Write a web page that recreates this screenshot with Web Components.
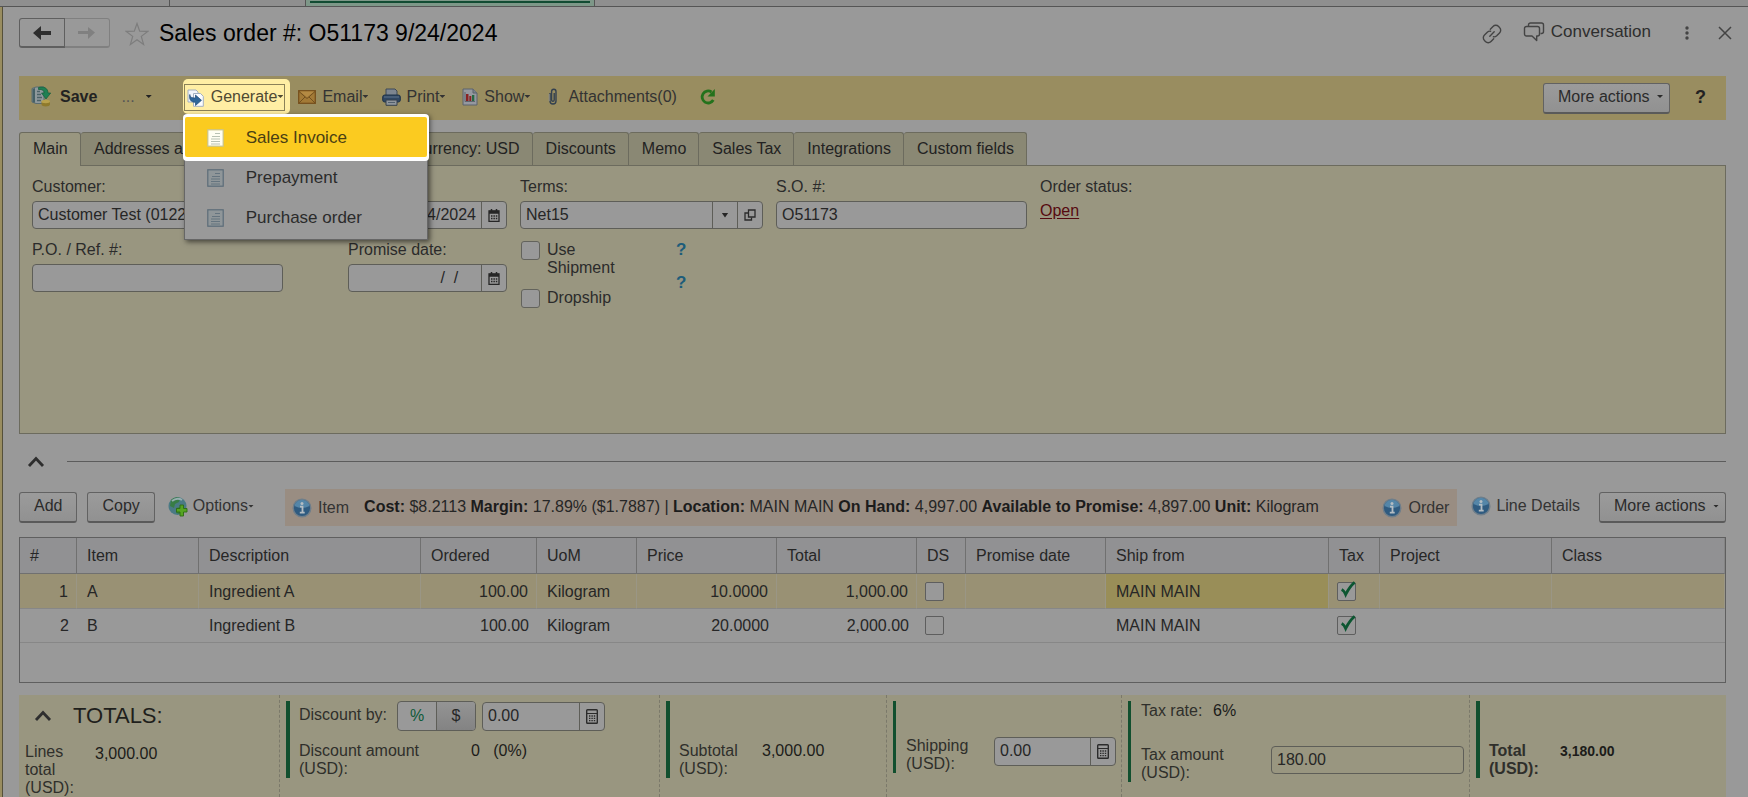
<!DOCTYPE html>
<html lang="en">
<head>
<meta charset="utf-8">
<title>Sales order #: O51173</title>
<style>
  body { margin: 0; background: #999; color: #2b2b2b; font: 16px/18px "Liberation Sans", Arial, sans-serif; }
</style>
</head>
<body>
<sales-order-page></sales-order-page>

<script>
const BASE = `
  *, *::before, *::after { box-sizing: border-box; }
  button, input, select { font: inherit; color: inherit; margin: 0; padding: 0; border: 0; background: none; border-radius: 0; outline: 0; }
  button { display: inline-flex; align-items: center; white-space: nowrap; cursor: pointer; }
  .arrow { width: 6px; height: 3px; background: currentColor; clip-path: polygon(0 0, 100% 0, 50% 100%); flex: none; }
`;
function define(name, css, html) {
  const tpl = document.createElement('template');
  tpl.innerHTML = `<style>${BASE}${css}</style>${html}`;
  customElements.define(name, class extends HTMLElement {
    constructor() {
      super();
      this.attachShadow({ mode: 'open' }).append(tpl.content.cloneNode(true));
    }
  });
}

/* Icons: [width, height, drawing] */
const ICONS = {
  back: [20, 16, '<path d="M9 1v5h10v4H9v5L1 8z" fill="#2e2e2e"/>'],
  forward: [20, 16, '<path d="M11 2v4H1v3h10v5l7-6.500z" fill="#808080"/>'],
  star: [24, 24, '<path d="M12 1.500l2.700 7.700 8 .2-6.400 5 2.300 8L12 17.700 5.400 22.400l2.300-8-6.400-5 8-.2z" fill="none" stroke="#7d7d7d" stroke-width="1.200"/>'],
  link: [20, 20, '<g fill="none" stroke="#444" stroke-width="1.400" stroke-linecap="round" stroke-linejoin="round"><path d="M8.300 5.200L11 2.500a3.900 3.900 0 0 1 5.600 0l.9.900a3.900 3.900 0 0 1 0 5.600l-2.800 2.800a3.900 3.900 0 0 1-3.300 1"/><path d="M11.700 14.800L9 17.500a3.900 3.900 0 0 1-5.600 0l-.9-.9a3.900 3.900 0 0 1 0-5.600l2.800-2.800a3.900 3.900 0 0 1 3.300-1"/><path d="M7.800 12.200l4.400-4.400"/></g>'],
  chat: [22, 20, '<g fill="none" stroke="#444" stroke-width="1.400" stroke-linejoin="round"><path d="M5.500 4.500V3a2 2 0 0 1 2-2h11a2 2 0 0 1 2 2v6.500a2 2 0 0 1-2 2h-1"/><path d="M3.500 4.500h11a2 2 0 0 1 2 2V12a2 2 0 0 1-2 2h-.8v4.500L9 14H3.500a2 2 0 0 1-2-2V6.500a2 2 0 0 1 2-2z"/></g>'],
  dots: [4, 14, '<g fill="#444"><circle cx="2" cy="2" r="1.700"/><circle cx="2" cy="7" r="1.700"/><circle cx="2" cy="12" r="1.700"/></g>'],
  close: [14, 14, '<path d="M1 1l12 12M13 1L1 13" stroke="#444" stroke-width="1.500"/>'],
  save: [20, 21, '<path d="M1 2.500L5 1h8v16.500H5L1 16z" fill="#8f999c" stroke="#5b6c70"/><path d="M1.500 3L4 2v14.800L1.500 16z" fill="#466066"/><path d="M6 5.500h3M6 8.500h4M6 11.500h5M6 14.500h4" stroke="#4c6267" stroke-width="1.300"/><path d="M7.500 1.500c5-1.500 9.500.5 9.500 5.500h2.700l-4.700 6L10.500 7h2.700c0-2.300-2-4-5.700-3.500z" fill="#1f8053" stroke="#155c3c" stroke-width=".7"/><path d="M10.500 15.500v3c0 2.600 8.500 2.600 8.500 0v-3z" fill="#8f7a2c"/><ellipse cx="14.700" cy="15.500" rx="4.300" ry="1.700" fill="#b8a14c"/>'],
  generate: [17, 18, '<path d="M1 1h8l2 2v10H1z" fill="#f1f5fb" stroke="#a3b0c0"/><path d="M6.500 4.500h7l2.800 2.800v10H6.500z" fill="#fafcff" stroke="#a3b0c0"/><path d="M2.800 5.500c.2 2.800 2 3.500 5.700 3.500V6l6 5.300-6 5.200v-3.200c-4.500 0-6.700-2.800-5.700-7.800z" fill="#2f6699" stroke="#1f4a78" stroke-width=".7"/>'],
  email: [18, 14, '<rect x=".7" y=".7" width="16.600" height="12.600" fill="#a37a36" stroke="#77501d" stroke-width="1.300"/><path d="M1 1.500l8 7 8-7M1 13l6-6M17 13l-6-6" fill="none" stroke="#72501f"/><path d="M2 1.400h14L9 7.300z" fill="#b48a43"/>'],
  print: [19, 18, '<path d="M4 1h9l2 2v5H4z" fill="#7c8590" stroke="#3d4856"/><rect x=".7" y="7" width="17.600" height="7" rx="2" fill="#2f4763" stroke="#1f3249"/><path d="M2 9h15" stroke="#60758b"/><path d="M4 12h11v5.300H4z" fill="#8f959b" stroke="#36404c"/><path d="M6 14.500h7" stroke="#52606d"/>'],
  show: [16, 18, '<path d="M1 1h10l4 4v12H1z" fill="#95989f" stroke="#5b636d"/><path d="M11 1v4h4" fill="#7d838b" stroke="#5b636d"/><path d="M3 4v9.500h10" fill="none" stroke="#60666e"/><path d="M4 6h2.500v7H4z" fill="#8a2222"/><path d="M7.300 8h2v5h-2z" fill="#8a2222"/><path d="M10 7h2.300v6H10z" fill="#276a43"/>'],
  clip: [10, 19, '<path d="M2 6v8a3 3 0 0 0 6 0V4.500a2.200 2.200 0 0 0-4.400 0V13a1.300 1.300 0 0 0 2.600 0V6" fill="none" stroke="#33414f" stroke-width="1.400"/><path d="M1.200 7v7" stroke="#8f8f8f"/>'],
  refresh: [17, 18, '<path d="M12.500 4A6 6 0 1 0 14.300 12" fill="none" stroke="#24721c" stroke-width="2.800"/><path d="M15.800 1v7.500H8.500z" fill="#24721c"/>'],
  doc: [17, 18, '<rect x=".8" y=".8" width="15.400" height="16.400" fill="var(--paper, #8f9699)" stroke="var(--edge, #5b6c78)" stroke-width="1.200"/><path d="M8 4.500h5M5 7.500h8M4 10h9M4 12.500h9M4 15h9" stroke="var(--rule, #65747f)"/>'],
  calendar: [12, 13, '<path d="M1 2h10v10.400H1z" fill="none" stroke="#262626" stroke-width="1.300"/><path d="M1 1.700h10v3H1z" fill="#262626"/><path d="M3.500 0v2.500M8.500 0v2.500" stroke="#262626" stroke-width="1.500"/><path d="M3 7h6.400M3 9.500h6.400" stroke="#262626" stroke-width="1.400" stroke-dasharray="1.500 .9"/>'],
  calc: [12, 15, '<rect x=".7" y=".7" width="10.600" height="13.600" rx=".8" fill="none" stroke="#2b2b2b" stroke-width="1.400"/><path d="M1 4.500h10" stroke="#2b2b2b" stroke-width="1.200"/><path d="M3 7h6.500M3 9.300h6.500M3 11.600h6.500" stroke="#2b2b2b" stroke-width="1.300" stroke-dasharray="1.400 1"/>'],
  open: [12, 12, '<g fill="none" stroke="#2b2b2b" stroke-width="1.300"><path d="M4.500 1h6.500v7H4.500z"/><path d="M4 4H1v7h6.500V8.500"/></g>'],
  chevron: [18, 12, '<path d="M2 10l7-7.500 7 7.500" fill="none" stroke="#2e2e2e" stroke-width="2.800"/>'],
  options: [21, 21, '<circle cx="9.500" cy="10" r="9" fill="#4a7a84"/><path d="M3 4c3-3 7-3.500 9-2l-1 4-4 2-1 4-4-2zM8 12l4-1 2 3-3 4-3-1z" fill="#387d45"/><path d="M4 5q5-4 10-1" fill="none" stroke="#96aeb0" stroke-width="2"/><path d="M12 9h3.500v3.500H19V16h-3.500v4H12v-4H8.500v-3.500H12z" fill="#56a521" stroke="#2e6b12" stroke-width=".9"/>'],
  info: [20, 20, '<circle cx="10" cy="10" r="8.800" fill="#2f5b80" stroke="#6f7e8a" stroke-width="1.400"/><path d="M2.500 8a7.600 7.600 0 0 1 15 0q-7.500 4-15 0z" fill="#5586a8"/><circle cx="10" cy="5.500" r="1.500" fill="#b4bdc3"/><path d="M8 8.700h2.500v6M7.800 14.700h4.900" fill="none" stroke="#b4bdc3" stroke-width="1.800"/>'],
  tick: [19, 20, '<path d="M3 9.500c2 1 3.500 3 4.500 5.500C10 10 13 5 17.500 1.500" fill="none" stroke="#0c5631" stroke-width="3.200"/>']
};
customElements.define('ui-icon', class extends HTMLElement {
  connectedCallback() {
    if (this.shadowRoot) return;
    const [w, h, art] = ICONS[this.getAttribute('name')];
    this.attachShadow({ mode: 'open' }).innerHTML =
      `<style>:host{display:inline-flex;flex:none} svg{display:block}</style><svg width="${w}" height="${h}" viewBox="0 0 ${w} ${h}" aria-hidden="true">${art}</svg>`;
  }
});

define('app-tab-strip', `
  :host { display: flex; height: 7px; background: #8f8f8f; border-bottom: 1px solid #555; box-sizing: border-box; }
  i { width: 170px; border-right: 1px solid #555; }
  i.second { width: 136px; }
  i.active { width: 289px; background: #7d9788; padding: 1px 4px; }
  i.active::before { content: ""; display: block; height: 2px; background: #114b32; }
`, '<i></i><i class="second"></i><i class="active"></i>');

define('order-header', `
  :host { display: flex; align-items: center; height: 69px; margin-right: -6px; padding: 11px 0 28px 0; box-sizing: border-box; }
  .nav { display: flex; }
  .nav button { width: 46px; height: 30px; justify-content: center; border: 1px solid #5f5f5f; border-bottom-width: 2px; border-radius: 3px 0 0 3px; }
  .nav button + button { width: 45px; border-color: #808080; border-left: 0; border-radius: 0 3px 3px 0; }
  .star { margin: 0 10px 0 15px; padding-top: 2px; }
  h1 { margin: 0; font-size: 23px; line-height: 28px; font-weight: 400; color: #000; flex: 1; white-space: nowrap; }
  .chat { font-size: 17px; gap: 6px; margin: 0 34px 0 21px; padding-bottom: 2px; color: #2e2e2e; }
  .link { padding-top: 2px; }
  .close { margin-left: 29px; }
`, `
  <div class="nav"><button aria-label="Back"><ui-icon name="back"></ui-icon></button><button aria-label="Forward"><ui-icon name="forward"></ui-icon></button></div>
  <button class="star" aria-label="Favorite"><ui-icon name="star"></ui-icon></button>
  <h1>Sales order #: O51173 9/24/2024</h1>
  <button class="link" aria-label="Copy link"><ui-icon name="link"></ui-icon></button>
  <button class="chat"><ui-icon name="chat"></ui-icon>Conversation</button>
  <button aria-label="Menu"><ui-icon name="dots"></ui-icon></button>
  <button class="close" aria-label="Close"><ui-icon name="close"></ui-icon></button>
`);

const PUSH = `
  :host { display: inline-flex; }
  button { height: 31px; padding: 0 14px 2px; border: 1px solid #626262; border-bottom: 2px solid #5a5a5a; border-radius: 3px; background: linear-gradient(#9b9b9b, #919191); color: #2b2b2b; }
`;
define('push-button', PUSH, '<button><slot></slot></button>');
define('more-actions', PUSH + `
  button { width: 127px; padding: 0 6px 2px 14px; justify-content: space-between; }
`, '<button>More actions<span class="arrow"></span></button>');

define('generate-menu', `
  :host { display: block; position: absolute; left: 1px; top: 35px; width: 244px; padding: 2px 0; z-index: 2; box-sizing: border-box; background: #999; border: 1px solid #666; box-shadow: 2px 2px 5px rgba(0,0,0,.55); font-size: 17px; line-height: 20px; color: #2b2b2b; }
  button { display: flex; width: 100%; height: 40px; padding: 2px 0 0 22px; gap: 22px; }
  button.current { background: #fbcb20; color: #4a4013; position: relative; border-radius: 2px; box-shadow: 0 -1px 0 2px #fff, 0 2px 0 2px #fff; --paper: #fffef2; --edge: #c9c38a; --rule: #b9c2b4; }
`, `
  <button class="current"><ui-icon name="doc"></ui-icon>Sales Invoice</button>
  <button><ui-icon name="doc"></ui-icon>Prepayment</button>
  <button><ui-icon name="doc"></ui-icon>Purchase order</button>
`);

define('order-toolbar', `
  :host { display: flex; align-items: center; height: 44px; background: #998d60; padding: 0 20px 0 12px; box-sizing: border-box; color: #333; }
  :host > button, button { padding-bottom: 3px; }
  .save { font-weight: 700; gap: 9px; color: #222; }
  .more { gap: 11px; margin-left: 24px; color: #555; }
  .more .arrow { color: #222; }
  .spot { position: relative; align-self: flex-start; margin: 3px 0 0 31px; padding: 5px 5px 3px 1px; background: #ffeea4; border-radius: 5px; }
  .spot button { height: 27px; padding: 0 1px 2px 2px; border: 1px solid #8b8158; color: #4f4a33; }
  .spot ui-icon { margin: 2px 7px 0 0; }
  .email { gap: 6px; margin-left: 8px; }
  .print { gap: 5px; margin-left: 14px; }
  .show { gap: 6px; margin-left: 17px; }
  .attach { gap: 10px; margin-left: 18px; }
  .refresh { margin-left: 22px; padding: 0; }
  .label { display: inline-flex; align-items: center; }
  more-actions { margin-left: auto; }
  .help { font-weight: 700; font-size: 18px; margin-left: 25px; color: #222; padding: 0; }
`, `
  <button class="save"><ui-icon name="save"></ui-icon>Save</button>
  <button class="more">...<span class="arrow"></span></button>
  <div class="spot">
    <button aria-haspopup="menu" aria-expanded="true"><ui-icon name="generate"></ui-icon>Generate<span class="arrow"></span></button>
    <generate-menu></generate-menu>
  </div>
  <button class="email"><ui-icon name="email"></ui-icon><span class="label">Email<span class="arrow"></span></span></button>
  <button class="print"><ui-icon name="print"></ui-icon><span class="label">Print<span class="arrow"></span></span></button>
  <button class="show"><ui-icon name="show"></ui-icon><span class="label">Show<span class="arrow"></span></span></button>
  <button class="attach"><ui-icon name="clip"></ui-icon>Attachments(0)</button>
  <button class="refresh" aria-label="Refresh"><ui-icon name="refresh"></ui-icon></button>
  <more-actions></more-actions>
  <button class="help">?</button>
`);

define('order-tabs', `
  :host { display: flex; height: 33px; margin-top: 12px; }
  button { height: 33px; padding: 0 12px 0 13px; color: #222; background: #8a8874; border: 1px solid #6c6b5e; border-width: 1px 1px 0 0; border-radius: 3px 3px 0 0; }
  button.active { background: #999680; height: 34px; width: 62px; padding-bottom: 1px; border-left-width: 1px; position: relative; z-index: 1; }
  button.wide { width: 318px; }
`, `
  <button class="active">Main</button>
  <button class="wide">Addresses and</button>
  <button>Currency: USD</button>
  <button>Discounts</button>
  <button>Memo</button>
  <button>Sales Tax</button>
  <button>Integrations</button>
  <button>Custom fields</button>
`);

/* Shared look of a boxed input with optional side buttons. */
const FIELD = `
  .box { display: flex; height: 28px; border: 1px solid #5e5e58; border-radius: 4px; background: #999; color: #262626; overflow: hidden; }
  .box input, .box select { flex: 1; min-width: 0; width: 0; padding: 0 5px 1px; appearance: none; }
  .box button, .box .cell { display: inline-flex; width: 25px; align-items: center; justify-content: center; border-left: 1px solid #5e5e58; }
`;
define('order-form', FIELD + `
  :host { display: grid; grid-template-columns: 316px 172px 256px 264px 1fr; align-content: start; row-gap: 10px; min-height: 269px; box-sizing: border-box; padding: 11px 12px; background: #999680; border: 1px solid #6c6b5e; }
  .field { min-height: 53px; }
  .field > label, .field > .caption { display: block; line-height: 20px; margin-bottom: 4px; }
  .w1 { width: 251px; } .w2 { width: 159px; } .w3 { width: 243px; }
  .w2 input { text-align: right; }
  .cell .arrow { width: 7px; height: 5px; }
  a { color: #560a10; line-height: 20px; display: inline-block; text-underline-offset: 2px; }
  .flags { display: grid; grid-template-columns: 155px auto; justify-content: start; padding: 1px 0 0 1px; grid-column: 3 / span 2; }
  .checks { display: grid; gap: 12px; justify-items: start; align-content: start; }
  .checks label { display: flex; gap: 7px; width: 100px; }
  input[type=checkbox] { appearance: none; flex: none; width: 19px; height: 19px; border: 1px solid #63635c; border-radius: 3px; background: #999; }
  .hints { display: grid; gap: 15px; align-content: start; }
  .hints button { font-weight: 700; font-size: 17px; line-height: 18px; color: #1d5c7a; }
`, `
  <div class="field"><label for="customer">Customer:</label><div class="box w1"><input id="customer" value="Customer Test (0122)"></div></div>
  <div class="field"><label for="date">Date:</label><div class="box w2"><input id="date" value="09/24/2024"><button aria-label="Pick date"><ui-icon name="calendar"></ui-icon></button></div></div>
  <div class="field"><label for="terms">Terms:</label><div class="box w3"><select id="terms"><option>Net15</option></select><span class="cell"><span class="arrow"></span></span><button aria-label="Open terms"><ui-icon name="open"></ui-icon></button></div></div>
  <div class="field"><label for="so">S.O. #:</label><div class="box w1"><input id="so" value="O51173"></div></div>
  <div class="field"><span class="caption">Order status:</span><a href="#status">Open</a></div>
  <div class="field"><label for="po">P.O. / Ref. #:</label><div class="box w1"><input id="po"></div></div>
  <div class="field"><label for="promise">Promise date:</label><div class="box w2"><input id="promise" value="/  /    "><button aria-label="Pick promise date"><ui-icon name="calendar"></ui-icon></button></div></div>
  <div class="flags">
    <div class="checks"><label><input type="checkbox">Use Shipment</label><label><input type="checkbox">Dropship</label></div>
    <div class="hints"><button>?</button><button>?</button></div>
  </div>
`);

define('section-divider', `
  :host { display: flex; align-items: center; height: 55px; padding-left: 8px; gap: 22px; }
  hr { flex: 1; margin: 0; border: 0; height: 1px; background: #5c5c5c; }
`, '<button aria-label="Collapse"><ui-icon name="chevron"></ui-icon></button><hr>');

define('lines-toolbar', `
  :host { display: flex; align-items: center; height: 37px; margin-bottom: 11px; color: #333; white-space: nowrap; }
  push-button { margin-right: 10px; }
  .options { gap: 4px; margin: 0 31px 0 3px; padding-bottom: 3px; }
  .label { display: inline-flex; align-items: center; }
  .strip { flex: 1; min-width: 0; height: 37px; display: flex; align-items: center; padding: 0 8px 0 7px; background: #998d82; }
  .strip button { gap: 6px; }
  p { flex: 1; margin: 0 0 0 15px; padding-bottom: 1px; color: #262626; }
  b { color: #1c1c1c; }
  .details { gap: 5px; margin: 0 19px 0 14px; padding-bottom: 3px; }
`, `
  <push-button>Add</push-button><push-button>Copy</push-button>
  <button class="options"><ui-icon name="options"></ui-icon><span class="label">Options<span class="arrow"></span></span></button>
  <div class="strip">
    <button><ui-icon name="info"></ui-icon>Item</button>
    <p><b>Cost:</b> $8.2113 <b>Margin:</b> 17.89% ($1.7887) | <b>Location:</b> MAIN MAIN <b>On Hand:</b> 4,997.00 <b>Available to Promise:</b> 4,897.00 <b>Unit:</b> Kilogram</p>
    <button><ui-icon name="info"></ui-icon>Order</button>
  </div>
  <button class="details"><ui-icon name="info"></ui-icon>Line Details</button>
  <more-actions></more-actions>
`);

const LINES = [
  ['1', 'A', 'Ingredient A', '100.00', 'Kilogram', '10.0000', '1,000.00'],
  ['2', 'B', 'Ingredient B', '100.00', 'Kilogram', '20.0000', '2,000.00']
];
const check = (label, on) => `<span class="check"><input type="checkbox" aria-label="${label}"${on ? ' checked' : ''}>${on ? '<ui-icon name="tick"></ui-icon>' : ''}</span>`;
define('lines-table', `
  :host { display: block; min-height: 146px; box-sizing: border-box; border: 1px solid #5f5f5f; }
  table { width: 100%; table-layout: fixed; border-collapse: separate; border-spacing: 0; color: #262626; }
  th, td { padding: 0 8px 0 10px; text-align: left; font-weight: 400; white-space: nowrap; overflow: hidden; }
  th { height: 36px; background: #919193; border-right: 1px solid #707070; border-bottom: 1px solid #707070; }
  th:last-child { border-right-color: #858585; }
  td { height: 34px; border-bottom: 1px solid #878787; }
  td.n { text-align: right; }
  tr.current td { height: 35px; padding-top: 1px; background: #999174; border-right: 1px solid #9a9685; }
  tr.current td.cell { background: #998e58; }
  .check { display: inline-grid; grid-template: 19px / 19px; margin-left: -2px; vertical-align: middle; }
  .check > * { grid-area: 1 / 1; }
  input { appearance: none; width: 19px; height: 19px; border: 1px solid #5e5e5e; border-radius: 2px; background: #999; }
  .check ui-icon { margin: -2px 0 0 2px; pointer-events: none; }
  th.tight, td.tight { padding-right: 0; }
`, `
  <table>
    <colgroup>${[57, 122, 222, 116, 100, 140, 140, 49, 140, 223, 51, 172, 173].map(w => `<col style="width:${w}px">`).join('')}</colgroup>
    <thead><tr><th>#</th><th>Item</th><th>Description</th><th>Ordered</th><th>UoM</th><th>Price</th><th>Total</th><th class="tight">DS</th><th>Promise date</th><th>Ship from</th><th class="tight">Tax</th><th>Project</th><th>Class</th></tr></thead>
    <tbody>${LINES.map((r, i) => `<tr${i ? '' : ' class="current"'}>${r.map((c, k) => `<td${[0, 3, 5, 6].includes(k) ? ' class="n"' : ''}>${c}</td>`).join('')}<td class="tight">${check('DS')}</td><td></td><td class="cell">MAIN MAIN</td><td class="tight">${check('Tax', true)}</td><td></td><td></td></tr>`).join('')}</tbody>
  </table>
`);

define('totals-section', `
  :host { display: block; padding: 6px 0 0 6px; border-right: 1px dashed #7b796a; }
  :host([last]) { border-right: 0; }
  :host([first]) { padding-left: 0; }
  div { min-height: var(--bar, 77px); padding-left: var(--inset, 9px); border-left: var(--line, 4px) solid #114f2e; }
  :host([first]) div { border-left: 0; padding-left: 6px; }
`, '<div><slot></slot></div>');

define('order-totals', FIELD + `
  :host { display: grid; grid-template-columns: 261fr 380fr 227fr 235fr 348fr 256fr; min-height: 102px; margin-top: 12px; background: #999680; color: #2f2f2b; }
  .thin { --line: 3px; --inset: 10px; }
  .ship-part { --bar: 72px; }
  .tax-part { --bar: 81px; }
  .head { display: flex; align-items: center; gap: 21px; height: 30px; padding-left: 9px; font-size: 22px; color: #1f1f1c; }
  .pair { display: grid; grid-template-columns: var(--label) auto; justify-content: start; }
  .value { color: #1c1c1a; }
  .lines { --label: 70px; margin-top: 12px; }
  .lines .value { padding-top: 2px; }
  .by { display: grid; grid-template-columns: 98px 79px 129px; height: 30px; }
  .by > label { padding-top: 5px; }
  .seg { display: flex; height: 30px; border: 1px solid #5e5e58; border-radius: 4px; background: #999; overflow: hidden; }
  .seg button { flex: 1; justify-content: center; color: #0e5a38; }
  .seg button + button { border-left: 1px solid #5e5e58; background: linear-gradient(#949494, #838383); color: #262626; }
  .by .box { margin: 1px 0 0 6px; height: 29px; }
  .amount { margin-top: 11px; display: grid; grid-template-columns: 172px auto; justify-content: start; }
  .amount .value { white-space: pre; }
  .subtotal { --label: 83px; padding-top: 41px; }
  .ship { --label: 88px; padding-top: 36px; }
  .ship .box { width: 122px; height: 29px; }
  .rate { --label: 72px; padding-top: 1px; }
  .tax { display: grid; grid-template-columns: 130px 1fr; margin-top: 26px; padding-right: 5px; }
  .tax .box { background: none; }
  .total { --label: 71px; padding-top: 41px; font-weight: 700; }
  .total .value { font-size: 14px; }
`, `
  <totals-section first>
    <div class="head"><ui-icon name="chevron"></ui-icon>TOTALS:</div>
    <div class="pair lines"><span>Lines<br>total<br>(USD):</span><span class="value">3,000.00</span></div>
  </totals-section>
  <totals-section>
    <div class="by"><label for="disc">Discount by:</label><div class="seg"><button>%</button><button>$</button></div><div class="box"><input id="disc" value="0.00"><button aria-label="Calculator"><ui-icon name="calc"></ui-icon></button></div></div>
    <div class="amount"><span>Discount amount<br>(USD):</span><span class="value">0   (0%)</span></div>
  </totals-section>
  <totals-section>
    <div class="pair subtotal"><span>Subtotal<br>(USD):</span><span class="value">3,000.00</span></div>
  </totals-section>
  <totals-section class="thin ship-part">
    <div class="pair ship"><label for="ship">Shipping<br>(USD):</label><div class="box"><input id="ship" value="0.00"><button aria-label="Calculator"><ui-icon name="calc"></ui-icon></button></div></div>
  </totals-section>
  <totals-section class="thin tax-part">
    <div class="pair rate"><span>Tax rate:</span><span class="value">6%</span></div>
    <div class="tax"><label for="tax">Tax amount<br>(USD):</label><div class="box"><input id="tax" value="180.00" readonly></div></div>
  </totals-section>
  <totals-section last>
    <div class="pair total"><span>Total<br>(USD):</span><span class="value">3,180.00</span></div>
  </totals-section>
`);

define('sales-order-page', `
  :host { display: flex; flex-direction: column; min-height: 100vh; }
  main { flex: 1; padding: 0 22px 0 16px; border-left: 1px solid #55503a; margin-left: 2px; box-shadow: -2px 0 0 #998d60; }
`, `
  <app-tab-strip></app-tab-strip>
  <main>
    <order-header></order-header>
    <order-toolbar></order-toolbar>
    <order-tabs></order-tabs>
    <order-form></order-form>
    <section-divider></section-divider>
    <lines-toolbar></lines-toolbar>
    <lines-table></lines-table>
    <order-totals></order-totals>
  </main>
`);
</script>
</body>
</html>
